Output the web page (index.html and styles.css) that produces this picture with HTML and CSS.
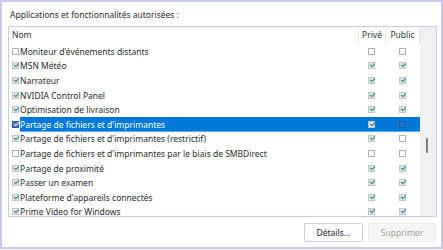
FILE: index.html
```html
<!DOCTYPE html>
<html lang="fr">
<head>
<meta charset="utf-8">
<link rel="stylesheet" href="styles.css">
</head>
<body>
<div class="frame">
  <div class="title">Applications et fonctionnalités autorisées :</div>
  <div class="list">
    <div class="content">
      <div class="head">
        <div class="h-name">Nom</div>
        <div class="h-col">Privé</div>
        <div class="h-col h-pub">Public</div>
      </div>
      <div class="rows">
        <div class="row"><span class="cb"></span><div class="body"><span class="name">Moniteur d'événements distants</span><span class="col"><span class="cb"></span></span><span class="col pub"><span class="cb"></span></span></div></div>
        <div class="row"><span class="cb on"></span><div class="body"><span class="name">MSN Météo</span><span class="col"><span class="cb on"></span></span><span class="col pub"><span class="cb on"></span></span></div></div>
        <div class="row"><span class="cb on"></span><div class="body"><span class="name">Narrateur</span><span class="col"><span class="cb on"></span></span><span class="col pub"><span class="cb on"></span></span></div></div>
        <div class="row"><span class="cb on"></span><div class="body"><span class="name">NVIDIA Control Panel</span><span class="col"><span class="cb on"></span></span><span class="col pub"><span class="cb on"></span></span></div></div>
        <div class="row"><span class="cb on"></span><div class="body"><span class="name">Optimisation de livraison</span><span class="col"><span class="cb on"></span></span><span class="col pub"><span class="cb on"></span></span></div></div>
        <div class="row sel"><span class="cb on blue"></span><div class="body"><span class="name">Partage de fichiers et d'imprimantes</span><span class="col"><span class="cb on"></span></span><span class="col pub"><span class="cb dark"></span></span></div></div>
        <div class="row"><span class="cb on"></span><div class="body"><span class="name">Partage de fichiers et d'imprimantes (restrictif)</span><span class="col"><span class="cb on"></span></span><span class="col pub"><span class="cb"></span></span></div></div>
        <div class="row"><span class="cb"></span><div class="body"><span class="name">Partage de fichiers et d'imprimantes par le biais de SMBDirect</span><span class="col"><span class="cb"></span></span><span class="col pub"><span class="cb"></span></span></div></div>
        <div class="row"><span class="cb on"></span><div class="body"><span class="name">Partage de proximité</span><span class="col"><span class="cb on"></span></span><span class="col pub"><span class="cb on"></span></span></div></div>
        <div class="row"><span class="cb on"></span><div class="body"><span class="name">Passer un examen</span><span class="col"><span class="cb on"></span></span><span class="col pub"><span class="cb on"></span></span></div></div>
        <div class="row"><span class="cb on"></span><div class="body"><span class="name">Plateforme d'appareils connectés</span><span class="col"><span class="cb on"></span></span><span class="col pub"><span class="cb on"></span></span></div></div>
        <div class="row"><span class="cb on"></span><div class="body"><span class="name">Prime Video for Windows</span><span class="col"><span class="cb on"></span></span><span class="col pub"><span class="cb on"></span></span></div></div>
      </div>
    </div>
    <div class="scroll"><div class="thumb"></div></div>
  </div>
  <div class="buttons">
    <button class="btn">Détails...</button>
    <button class="btn disabled">Supprimer</button>
  </div>
</div>
</body>
</html>
```

FILE: styles.css
```css
* { box-sizing: border-box; }
html, body { margin: 0; padding: 0; background: #ffffff; }
body {
  font-family: "Noto Sans", "Open Sans", sans-serif;
  font-size: 8.5px;
  color: #262626;
}
.frame {
  width: 443px;
  height: 249px;
  border: 2px solid #cacaea;
  padding: 6px 4px 5px 6px;
  display: flex;
  flex-direction: column;
  background: #fff;
}
.title {
  height: 14px;
  line-height: 14px;
  padding-left: 2px;
  color: #2a2a2a;
}
.list {
  margin-top: 4px;
  height: 191px;
  border: 1px solid #c9c9e9;
  display: flex;
  overflow: hidden;
}
.content {
  flex: 1;
  display: flex;
  flex-direction: column;
  overflow: hidden;
}
.head {
  height: 17px;
  display: flex;
  align-items: stretch;
  flex: none;
}
.h-name {
  flex: 1;
  padding-left: 3px;
  line-height: 16px;
  color: #333;
}
.h-col {
  width: 27px;
  text-align: center;
  line-height: 16px;
  border-left: 1px solid #e6e6e6;
  color: #333;
}
.h-pub {
  width: 35px;
  border-right: 1px solid #e6e6e6;
}
.rows { flex: 1; overflow: hidden; }
.row {
  height: 14.6px;
  display: flex;
  align-items: center;
}
.row > .cb { margin: 0 1px 0 3px; }
.body {
  flex: 1;
  height: 100%;
  display: flex;
  align-items: center;
}
.name {
  flex: 1;
  white-space: nowrap;
  overflow: hidden;
  color: #2b2b2b;
}
.col {
  width: 27px;
  display: flex;
  justify-content: center;
}
.col.pub { width: 35px; }
.sel .body {
  background: #0078d7;
  box-shadow: inset 0 -1px 0 #66aef0;
}
.sel .name { color: #fff; }
.cb {
  width: 7px;
  height: 7px;
  border: 1px solid #b0b0b0;
  background: #fff;
  position: relative;
  flex: none;
  display: inline-block;
}
.cb.on {
  background: #e6e6e6;
  border-color: #c4c4c4;
}
.cb.on::after {
  content: "";
  position: absolute;
  left: 1px;
  top: 0px;
  width: 4px;
  height: 2px;
  border-left: 1.2px solid #1a8f95;
  border-bottom: 1.2px solid #1a8f95;
  transform: rotate(-45deg);
}
.cb.blue { background: #3a74b8; border-color: #2d5f9c; }
.cb.blue::after { border-color: #dfefff; }
.cb.dark { background: transparent; border-color: #2a5d96; }
.scroll {
  width: 16px;
  background: #f0f0f0;
  position: relative;
  flex: none;
}
.thumb {
  position: absolute;
  left: 6px;
  top: 111px;
  width: 2px;
  height: 15px;
  background: #7f7f7f;
  border-radius: 1px;
}
.buttons {
  margin-top: 6px;
  display: flex;
  justify-content: flex-end;
  gap: 5px;
  padding-right: 1px;
}
.btn {
  font-family: inherit;
  font-size: 8.5px;
  height: 19px;
  padding: 0;
  border: 1px solid #d0d0d0;
  border-radius: 2px;
  background: #fdfdfd;
  color: #1e1e1e;
}
.btn:first-child { width: 59px; }
.btn.disabled { width: 68px; color: #a0a0a0; background: #f5f5f5; border-color: #ebebeb; }
```
